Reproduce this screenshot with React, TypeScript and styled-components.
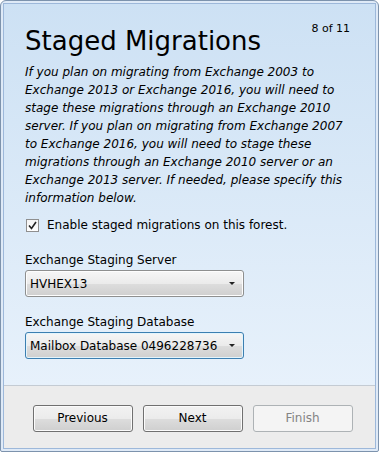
import React, { useState } from 'react';
import styled, { createGlobalStyle } from 'styled-components';

const GlobalStyle = createGlobalStyle`
  html, body {
    margin: 0;
    padding: 0;
    background: #ffffff;
  }
  body {
    font-family: 'DejaVu Sans', Verdana, sans-serif;
  }
`;

const Frame = styled.div`
  box-sizing: border-box;
  width: 379px;
  height: 452px;
  border: 1px solid #7d93ad;
  border-radius: 6px 6px 2px 2px;
  background: #dfeaf7;
  padding: 2px;
  display: flex;
`;

const Inner = styled.div`
  flex: 1;
  border: 1px solid #9db8da;
  display: flex;
  flex-direction: column;
  min-width: 0;
`;

const Body = styled.div`
  flex: 1;
  background: linear-gradient(to bottom, #cde1f4 0%, #e7f1fb 100%);
  padding: 0 0 0 21px;
  display: flex;
  flex-direction: column;
`;

const Header = styled.div`
  display: flex;
  justify-content: space-between;
  align-items: flex-start;
  padding-right: 25px;
`;

const Title = styled.h1`
  margin: 20px 0 0;
  font-size: 26px;
  font-weight: normal;
  color: #000;
  line-height: 34px;
`;

const Step = styled.div`
  margin-top: 18px;
  font-size: 11px;
  color: #000;
`;

const Intro = styled.p`
  margin: 5px 0 0;
  font-size: 12px;
  font-style: italic;
  line-height: 18px;
  color: #000;
  padding-right: 26px;
`;

const CheckRow = styled.label`
  display: flex;
  align-items: center;
  gap: 8px;
  margin-top: 11px;
  font-size: 12px;
`;

const Box = styled.span`
  box-sizing: border-box;
  margin-left: 1px;
  width: 13px;
  height: 13px;
  border: 1px solid #8f8f8f;
  background: linear-gradient(to bottom, #f4f4f4, #ffffff);
  display: flex;
  align-items: center;
  justify-content: center;
`;

const FieldLabel = styled.div<{ $gap: number }>`
  margin-top: ${(p) => p.$gap}px;
  font-size: 12px;
  line-height: 16px;
`;

const Select = styled.div<{ $focused?: boolean }>`
  box-sizing: border-box;
  margin-top: 2px;
  width: 219px;
  height: 27px;
  border: 1px solid ${(p) => (p.$focused ? '#3c7fb1' : '#8e8f8f')};
  border-radius: 3px;
  background: linear-gradient(to bottom, #f6f6f6 0%, #ebebeb 50%, #dddddd 51%, #cfcfcf 100%);
  box-shadow: inset 0 0 0 1px ${(p) => (p.$focused ? '#e3f4fc' : '#fdfdfd')};
  display: flex;
  align-items: center;
  justify-content: space-between;
  padding: 0 8px 0 4px;
  font-size: 12px;
`;

const Caret = styled.span`
  width: 0;
  height: 0;
  border-left: 3px solid transparent;
  border-right: 3px solid transparent;
  border-top: 3px solid #222;
`;

const Footer = styled.div`
  height: 60px;
  border-top: 1px solid #c4cbd3;
  background: #ececec;
  display: flex;
  align-items: center;
  justify-content: center;
  gap: 10px;
  padding-left: 6px;
  padding-top: 2px;
`;

const Button = styled.button`
  box-sizing: border-box;
  width: 100px;
  height: 27px;
  border: 1px solid #707070;
  border-radius: 3px;
  background: linear-gradient(to bottom, #f2f2f2 0%, #ebebeb 50%, #dddddd 51%, #cfcfcf 100%);
  box-shadow: inset 0 0 0 1px #fbfbfb;
  font-family: 'DejaVu Sans', Verdana, sans-serif;
  font-size: 12px;
  color: #000;
  padding: 0;
  &:disabled {
    border-color: #adb2b5;
    background: #f4f4f4;
    box-shadow: none;
    color: #838383;
  }
`;

const App: React.FC = () => {
  const [checked, setChecked] = useState(true);
  return (
    <>
      <GlobalStyle />
      <Frame>
        <Inner>
          <Body>
            <Header>
              <Title>Staged Migrations</Title>
              <Step>8 of 11</Step>
            </Header>
            <Intro>
              If you plan on migrating from Exchange 2003 to Exchange 2013 or Exchange 2016, you will need to
              stage these migrations through an Exchange 2010 server. If you plan on migrating from Exchange 2007
              to Exchange 2016, you will need to stage these migrations through an Exchange 2010 server or an
              Exchange 2013 server. If needed, please specify this information below.
            </Intro>
            <CheckRow onClick={() => setChecked(!checked)}>
              <Box>
                {checked && (
                  <svg width="9" height="9" viewBox="0 0 9 9">
                    <path d="M1 4.5 L3.5 7.5 L8 1" fill="none" stroke="#222" strokeWidth="1.6" />
                  </svg>
                )}
              </Box>
              Enable staged migrations on this forest.
            </CheckRow>
            <FieldLabel $gap={20}>Exchange Staging Server</FieldLabel>
            <Select>
              HVHEX13
              <Caret />
            </Select>
            <FieldLabel $gap={17}>Exchange Staging Database</FieldLabel>
            <Select $focused>
              Mailbox Database 0496228736
              <Caret />
            </Select>
          </Body>
          <Footer>
            <Button>Previous</Button>
            <Button>Next</Button>
            <Button disabled>Finish</Button>
          </Footer>
        </Inner>
      </Frame>
    </>
  );
};

export default App;
